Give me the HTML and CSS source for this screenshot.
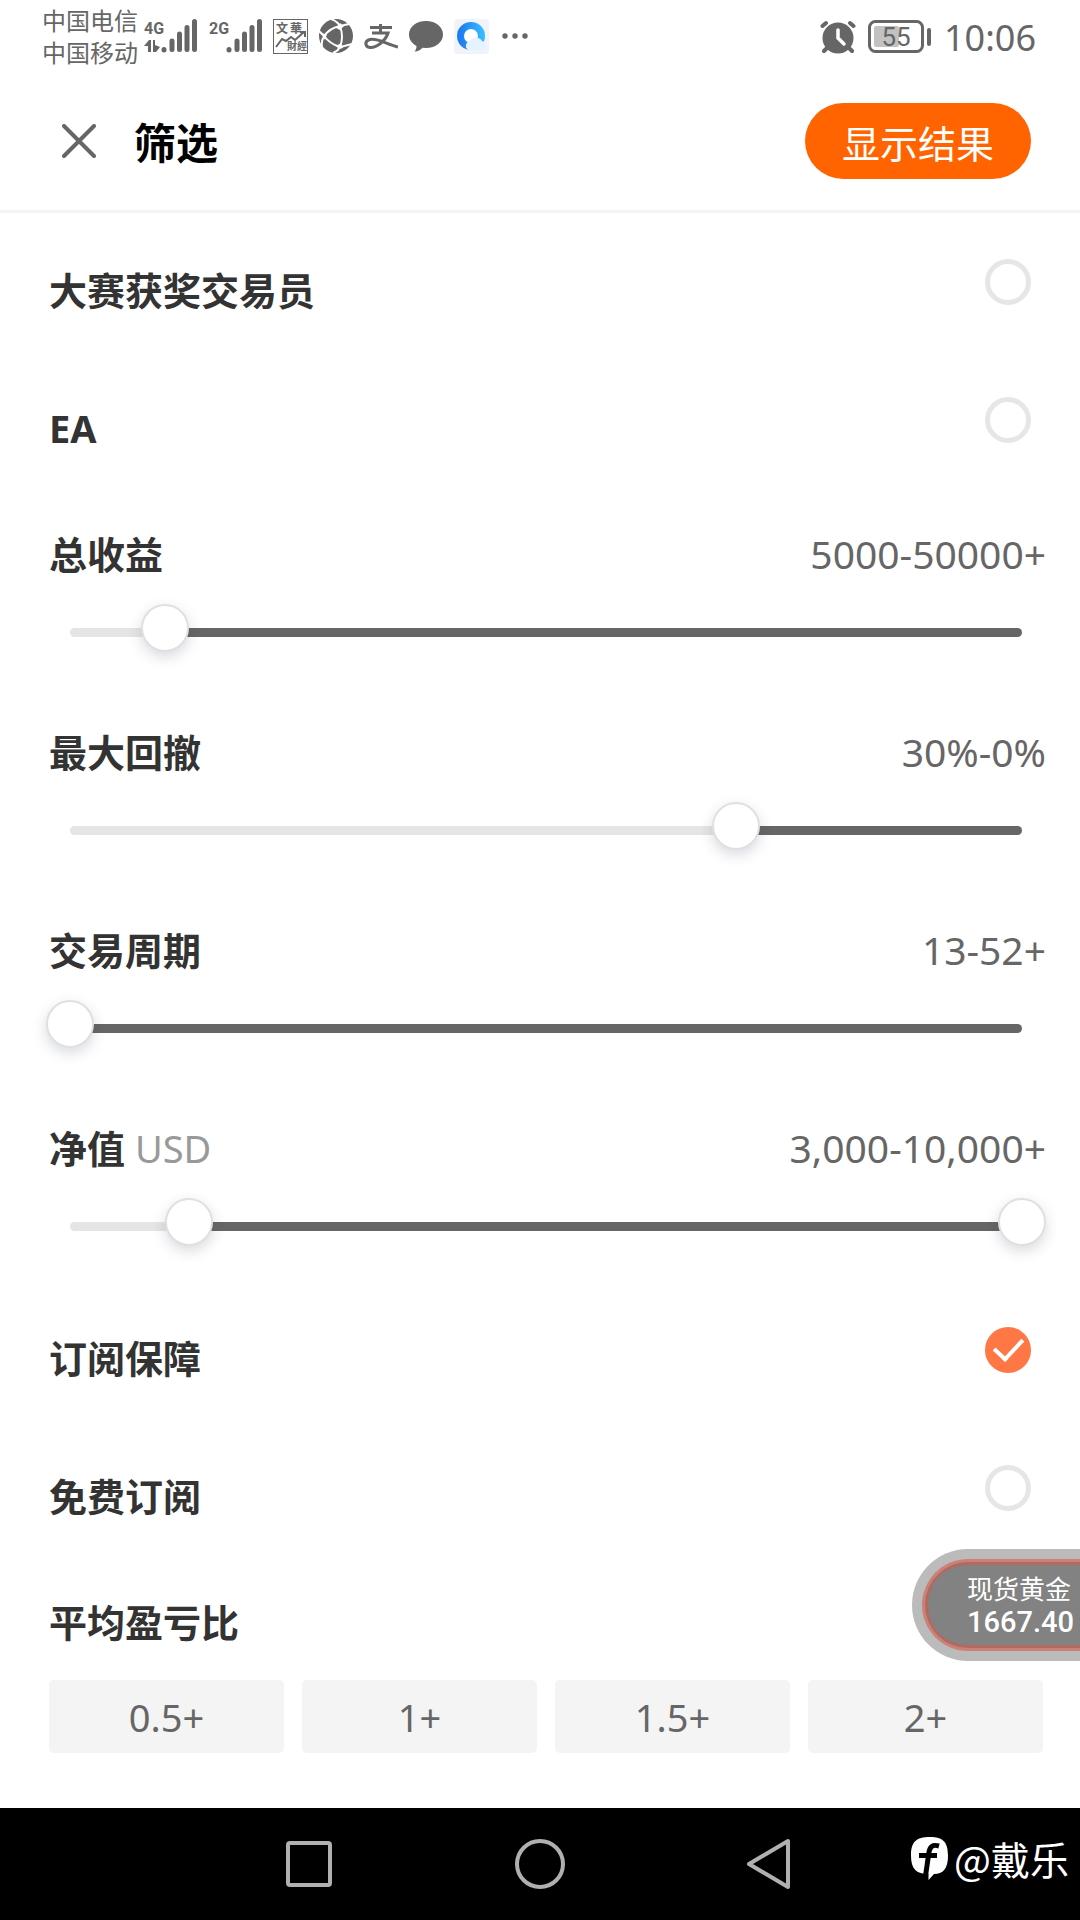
FILE: index.html
```html
<!DOCTYPE html>
<html lang="zh-CN">
<head>
    <meta charset="UTF-8">
    <meta name="viewport" content="width=device-width, initial-scale=1.0">
    <title>筛选</title>
    <link rel="stylesheet" href="styles.css">
</head>
<body>
    <div class="status-bar">
        <div class="carriers">
            <span>中国电信</span>
            <span>中国移动</span>
        </div>
        <div class="status-icons">
            <svg width="54" height="34" viewBox="0 0 54 34">
                <text class="net" x="0" y="15">4G</text>
                <path d="M0 27l5-6h2v12H4v-6zM9 21h2v5l5 2-4 5H9z"/>
                <path class="bars" d="M20 30.500v.5M28 22v8.500M35.500 15v15.500M43 8.500v22M50.500 2.500v28"/>
            </svg>
            <svg width="53" height="34" viewBox="0 0 53 34">
                <text class="net" x="0" y="15">2G</text>
                <path class="bars" d="M20 30.500v.5M28 22v8.500M35.500 15v15.500M43 8.500v22M50.500 2.500v28"/>
            </svg>
            <svg width="35" height="35" viewBox="0 0 35 35">
                <rect x=".5" y=".5" width="34" height="34" fill="none" stroke="#666"/>
                <text class="tiny" x="3" y="14">文</text>
                <text class="tiny" x="17" y="14">華</text>
                <text class="tinier" x="14" y="31">財經</text>
                <path d="M3 28l6-8 4 2 5-4 4 3 9-8M27 13h5v5" fill="none" stroke="#666" stroke-width="2"/>
            </svg>
            <svg width="34" height="34" viewBox="0 0 34 34">
                <circle cx="17" cy="17" r="17"/>
                <path d="M21 7Q11 9 5 17Q11 25 21 28Q25 18 21 7M12 0Q18 2 21 7L30 5M0 12L5 17Q2 22 3 28M33 25L21 28Q19 32 14 34" fill="none" stroke="#fff" stroke-width="2"/>
                <path d="M21 4l4 3-4 4-4-2zM3 14l5 2-3 5zM17 27l5-3 2 5-4 1z" fill="#fff"/>
            </svg>
            <svg width="34" height="34" viewBox="0 0 34 34">
                <path d="M6 8.500h22M16.500 5v9M8 14h16C22 21 13 29 6 28.500C1 28 0 22 6 20.500C14 19 22 25 34 28" fill="none" stroke="#666" stroke-width="3"/>
            </svg>
            <svg width="34" height="34" viewBox="0 0 34 34">
                <path d="M17 2C7 2 0 8 0 15.500c0 5 3 9 7.500 11.500c0 2-.5 4-2 5.500c3.500-.3 6-1.500 8-3.800L17 29c10 0 17-6 17-13.500S27 2 17 2z"/>
            </svg>
            <svg width="35" height="35" viewBox="0 0 35 35">
                <defs>
                    <linearGradient id="ring" x1="0" y1="0" x2="1" y2="0">
                        <stop offset="0" stop-color="#1f7cf0"/>
                        <stop offset="1" stop-color="#35b8ff"/>
                    </linearGradient>
                </defs>
                <rect width="35" height="35" rx="4" fill="#f0f3f8"/>
                <circle cx="17" cy="17" r="10.500" fill="#fff" stroke="url(#ring)" stroke-width="7"/>
                <path d="M14 31a5 5 0 0 1 2-9a7 7 0 0 1 12 0a5 5 0 0 1 2 9z" fill="#e6f2ff"/>
            </svg>
            <svg width="34" height="34" viewBox="0 0 34 34">
                <circle cx="5" cy="17" r="2.700"/>
                <circle cx="15" cy="17" r="2.700"/>
                <circle cx="25" cy="17" r="2.700"/>
            </svg>
        </div>
        <div class="status-right">
            <svg width="36" height="34" viewBox="0 0 36 34">
                <circle cx="18" cy="18" r="15.500"/>
                <path d="M2.500 6L6 3M33.500 6L30 3M4 31l4-4M32 31l-4-4" stroke="#666" stroke-width="4" stroke-linecap="round"/>
                <path d="M18 10v8l6 6" fill="none" stroke="#fff" stroke-width="3.500" stroke-linecap="round"/>
            </svg>
            <svg width="64" height="34" viewBox="0 0 64 34">
                <rect x="1.500" y="1.500" width="53" height="30" rx="6" fill="none" stroke="#666" stroke-width="3"/>
                <rect x="6" y="6" width="25" height="21" rx="2" fill="#c2c2c2"/>
                <rect x="59" y="8" width="4" height="18" rx="2"/>
                <text class="level" x="28" y="26">55</text>
            </svg>
            <span class="clock">10:06</span>
        </div>
    </div>

    <header class="header">
        <button type="button" class="close" aria-label="关闭">
            <svg width="34" height="34" viewBox="0 0 34 34">
                <path d="M2 2l30 30M32 2L2 32" stroke="#666" stroke-width="4" stroke-linecap="round"/>
            </svg>
        </button>
        <h1>筛选</h1>
        <button type="submit" form="filterForm" class="show-result">显示结果</button>
    </header>

    <form id="filterForm" class="filters">
        <div class="toggle-row">
            <label for="winner">大赛获奖交易员</label>
            <input type="checkbox" id="winner" name="winner">
        </div>
        <div class="toggle-row">
            <label for="ea">EA</label>
            <input type="checkbox" id="ea" name="ea">
        </div>

        <div class="range-row">
            <div class="range-head">
                <label for="profit">总收益</label>
                <output for="profit">5000-50000+</output>
            </div>
            <div class="range">
                <div class="track"><div class="fill" style="margin-left: 10%"></div></div>
                <input type="range" id="profit" name="profit" min="0" max="50000" value="5000">
            </div>
        </div>

        <div class="range-row">
            <div class="range-head">
                <label for="drawdown">最大回撤</label>
                <output for="drawdown">30%-0%</output>
            </div>
            <div class="range">
                <div class="track"><div class="fill" style="margin-left: 70%"></div></div>
                <input type="range" id="drawdown" name="drawdown" min="0" max="100" value="70">
            </div>
        </div>

        <div class="range-row">
            <div class="range-head">
                <label for="period">交易周期</label>
                <output for="period">13-52+</output>
            </div>
            <div class="range">
                <div class="track"><div class="fill" style="margin-left: 0%"></div></div>
                <input type="range" id="period" name="period" min="13" max="52" value="13">
            </div>
        </div>

        <div class="range-row">
            <div class="range-head">
                <label for="equityMin">净值 <span class="unit">USD</span></label>
                <output for="equityMin equityMax">3,000-10,000+</output>
            </div>
            <div class="range">
                <div class="track"><div class="fill" style="margin-left: 12.5%"></div></div>
                <input type="range" id="equityMin" name="equityMin" min="2000" max="10000" value="3000">
                <input type="range" id="equityMax" name="equityMax" min="2000" max="10000" value="10000" aria-label="净值上限">
            </div>
        </div>

        <div class="toggle-row">
            <label for="protect">订阅保障</label>
            <input type="checkbox" id="protect" name="protect" checked>
        </div>
        <div class="toggle-row">
            <label for="free">免费订阅</label>
            <input type="checkbox" id="free" name="free">
        </div>

        <div class="ratio">
            <h2>平均盈亏比</h2>
            <div class="chips">
                <button type="button">0.5+</button>
                <button type="button">1+</button>
                <button type="button">1.5+</button>
                <button type="button">2+</button>
            </div>
        </div>

        <div class="quote">
            <div class="quote-inner">
                <span class="quote-name">现货黄金</span>
                <span class="quote-price">1667.40</span>
            </div>
        </div>
    </form>

    <nav class="nav-bar">
        <button type="button" aria-label="最近任务">
            <svg width="60" height="60" viewBox="0 0 60 60">
                <rect x="9" y="9" width="42" height="42" rx="2"/>
            </svg>
        </button>
        <button type="button" aria-label="主页">
            <svg width="60" height="60" viewBox="0 0 60 60">
                <circle cx="30" cy="30" r="23"/>
            </svg>
        </button>
        <button type="button" aria-label="返回">
            <svg width="60" height="60" viewBox="0 0 60 60">
                <path d="M47 7v46L8 30z"/>
            </svg>
        </button>
        <div class="watermark">
            <svg width="38" height="43" viewBox="0 0 38 43">
                <path d="M19 0C32 0 37 5 37 18.500S32 37 23 37L17.500 43V37C5 37 0 32 0 18.500S5 0 19 0z" fill="#fff"/>
                <path d="M28 9c-7-2-9 1-10 6l-3.500 24M8 18.500h18" fill="none" stroke="#000" stroke-width="5"/>
            </svg>
            <span>@戴乐</span>
        </div>
    </nav>
</body>
</html>
```
FILE: styles.css
```css
* {
    box-sizing: border-box;
}

body {
    margin: 0;
    min-height: 100vh;
    display: flex;
    flex-direction: column;
    background: #fff;
    color: #333;
    font-family: "Noto Sans", "Noto Sans CJK SC", sans-serif;
    font-size: 38px;
}

button {
    padding: 0;
    border: none;
    background: none;
    font: inherit;
    cursor: pointer;
}

svg {
    display: block;
    flex: none;
}

/* status bar */
.status-bar {
    display: flex;
    height: 75px;
    padding: 5px 44px 0 42px;
    color: #666;
}

.carriers {
    display: flex;
    flex-direction: column;
    font-size: 24px;
    line-height: 32px;
}

.status-icons {
    display: flex;
    gap: 11px;
    margin-left: 6px;
    padding-top: 14px;
}

.status-bar svg {
    fill: #666;
}

.net {
    font: bold 16px Roboto, sans-serif;
}

.bars {
    stroke: #666;
    stroke-width: 5;
    stroke-linecap: round;
}

.tiny {
    font: bold 12px "Noto Sans CJK TC", sans-serif;
}

.tinier {
    font: bold 10px "Noto Sans CJK TC", sans-serif;
}

.level {
    font: 26px Roboto, sans-serif;
    text-anchor: middle;
}

.status-right {
    display: flex;
    gap: 12px;
    margin-left: auto;
    padding-top: 15px;
}

.clock {
    font-size: 36px;
    line-height: 36px;
}

/* header */
.header {
    display: flex;
    align-items: center;
    height: 138px;
    padding: 0 49px 3px 62px;
    border-bottom: 3px solid #f3f3f3;
}

h1 {
    margin: 0 auto 0 38px;
    padding-top: 4px;
    color: #000;
    font-size: 42px;
    line-height: 60px;
}

.show-result {
    width: 226px;
    height: 76px;
    border-radius: 38px;
    background: #ff6400;
    color: #fff;
}

/* filters */
.filters {
    position: relative;
    flex: 1;
    padding-top: 8px;
}

label,
h2 {
    font-size: 38px;
    font-weight: bold;
}

.toggle-row {
    display: flex;
    justify-content: space-between;
    align-items: flex-start;
    padding: 38px 49px;
}

.toggle-row label {
    line-height: 62px;
}

input[type="checkbox"] {
    appearance: none;
    display: grid;
    place-items: center;
    width: 46px;
    height: 46px;
    margin: 0;
    border: 5px solid #e6e6e6;
    border-radius: 50%;
}

input[type="checkbox"]:checked {
    border-color: #ff7744;
    background: #ff7744;
}

input[type="checkbox"]:checked::after {
    content: "";
    width: 13px;
    height: 24px;
    margin-bottom: 8px;
    border: solid #fff;
    border-width: 0 4px 4px 0;
    transform: rotate(43deg);
}

.range-row {
    padding: 29px 34px 43px 46px;
}

.range-head {
    display: flex;
    justify-content: space-between;
    padding-left: 3px;
    margin-bottom: 22px;
    line-height: 56px;
}

.range-head output {
    color: #666;
    font-size: 39px;
}

.unit {
    color: #999;
    font-weight: normal;
}

/* track and inputs share one grid cell, so two thumbs can sit on one track */
.range {
    display: grid;
    align-items: start;
}

.range > * {
    grid-area: 1 / 1;
}

.track {
    height: 9px;
    margin: 24px 24px 0;
    border-radius: 5px;
    background: #e5e5e5;
    overflow: hidden;
}

.fill {
    height: 9px;
    background: #666;
}

input[type="range"] {
    appearance: none;
    width: 100%;
    height: 48px;
    margin: 0;
    background: none;
    pointer-events: none;
}

input[type="range"]::-webkit-slider-thumb {
    appearance: none;
    width: 48px;
    height: 48px;
    border: 2px solid #e0e0e0;
    border-radius: 50%;
    background: #fff;
    box-shadow: 0 5px 14px rgba(40, 50, 80, 0.18);
    pointer-events: auto;
}

.ratio {
    padding: 29px 37px 55px 49px;
}

h2 {
    margin: 0 0 30px;
    line-height: 56px;
}

.chips {
    display: grid;
    grid-template-columns: repeat(4, 1fr);
    gap: 18px;
}

.chips button {
    height: 73px;
    border-radius: 5px;
    background: #f4f4f4;
    color: #666;
    font-size: 38px;
}

/* floating quote, docked to the right edge */
.quote {
    position: absolute;
    right: 0;
    bottom: 147px;
    width: 168px;
    height: 112px;
    padding: 10px 0 10px 10px;
    border-radius: 56px 0 0 56px;
    background: #bbb;
}

.quote-inner {
    display: flex;
    flex-direction: column;
    justify-content: center;
    height: 92px;
    padding: 2px 0 0 42px;
    border: solid #cb8177;
    border-width: 3px 0 3px 3px;
    border-radius: 46px 0 0 46px;
    background: #828282;
    box-shadow: inset 3px 0 0 #b4695f, inset 0 3px 0 #b4695f, inset 0 -3px 0 #b4695f;
    color: #fff;
    line-height: 33px;
    white-space: nowrap;
}

.quote-name {
    font-size: 26px;
}

.quote-price {
    font-family: Roboto, sans-serif;
    font-size: 29px;
    font-weight: 500;
}

/* system navigation */
.nav-bar {
    position: relative;
    display: flex;
    justify-content: center;
    align-items: center;
    gap: 171px;
    height: 112px;
    background: #000;
}

.nav-bar button svg {
    fill: none;
    stroke: #b0b0b0;
    stroke-width: 4;
    stroke-linejoin: round;
}

.watermark {
    position: absolute;
    right: 11px;
    bottom: 36px;
    display: flex;
    align-items: center;
    gap: 5px;
    color: #fff;
    font-family: "Noto Sans CJK SC", sans-serif;
    font-size: 39px;
    line-height: 52px;
}
```
